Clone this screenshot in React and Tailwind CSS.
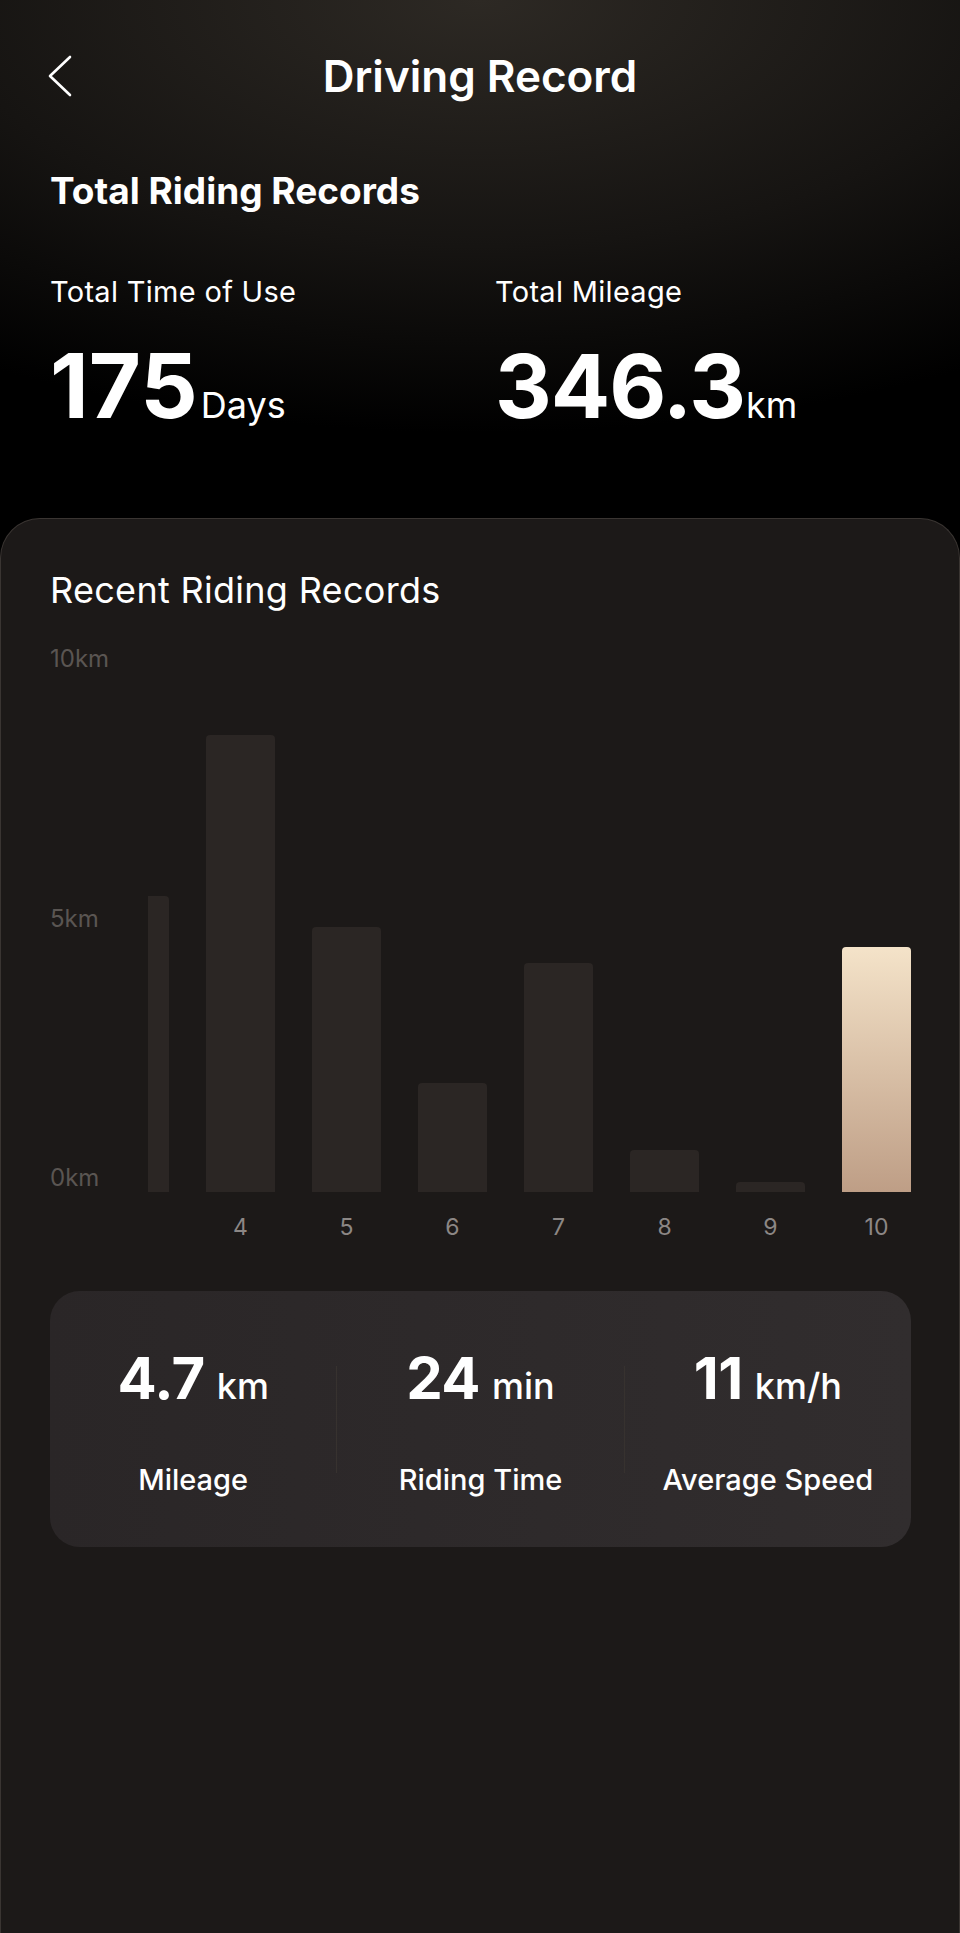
const bars = [
  { label: '', h: 296 },
  { label: '4', h: 457 },
  { label: '5', h: 265 },
  { label: '6', h: 109 },
  { label: '7', h: 229 },
  { label: '8', h: 42 },
  { label: '9', h: 10 },
  { label: '10', h: 245, active: true },
];

function Stat({ value, unit, label }) {
  return (
    <div className="flex-1 flex flex-col items-center pt-[55px]">
      <div className="flex items-baseline h-[64px]">
        <span className="text-[58px] leading-[64px] font-bold tracking-[-0.5px]">{value}</span>
        <span className="ml-[12px] text-[36px] leading-[40px] font-medium">{unit}</span>
      </div>
      <div className="mt-[52px] text-[29px] leading-[36px] font-medium">{label}</div>
    </div>
  );
}

export default function App() {
  return (
    <div className="min-h-screen flex flex-col bg-black text-white font-['Inter','Noto_Sans',sans-serif]">
      <div className="bg-[radial-gradient(110%_95%_at_50%_0%,#2d2924_0%,#161412_50%,#000000_88%)] px-[50px] pt-[50px] pb-[88px]">
        <div className="grid grid-cols-[1fr_auto_1fr] items-center h-[52px]">
          <svg width="26" height="42" viewBox="0 0 26 42" className="-ml-[3px]" fill="none">
            <path d="M23 2 L3 21 L23 40" stroke="white" strokeWidth="2.6" strokeLinecap="round" strokeLinejoin="round" />
          </svg>
          <h1 className="text-[44px] leading-[52px] font-semibold">Driving Record</h1>
          <div />
        </div>
        <h2 className="mt-[67px] text-[37px] leading-[44px] font-bold">Total Riding Records</h2>
        <div className="mt-[61px] grid grid-cols-[445px_1fr]">
          <div>
            <div className="text-[29px] leading-[36px] tracking-[0.3px]">Total Time of Use</div>
            <div className="mt-[32px] flex items-baseline">
              <span className="text-[90px] leading-[88px] font-bold">175</span>
              <span className="ml-[3px] text-[36px] leading-[40px]">Days</span>
            </div>
          </div>
          <div>
            <div className="text-[29px] leading-[36px] tracking-[0.3px]">Total Mileage</div>
            <div className="mt-[32px] flex items-baseline">
              <span className="text-[88px] leading-[88px] font-bold tracking-[-1px]">346.3</span>
              <span className="ml-[1px] text-[36px] leading-[40px]">km</span>
            </div>
          </div>
        </div>
      </div>

      <div className="flex-1 rounded-t-[40px] border border-b-0 border-[#3a3532] bg-[#1c1918] pl-[49px] pr-[48px] pt-[50px]">
        <h3 className="text-[36px] leading-[42px] font-normal tracking-[0.3px]">Recent Riding Records</h3>

        <div className="mt-[34px] flex items-start">
          <div className="w-[98px] h-[547px] flex flex-col justify-between text-[24px] leading-[28px] text-[#5a5552]">
            <span>10km</span>
            <span>5km</span>
            <span>0km</span>
          </div>
          <div className="flex-1 h-[596px] overflow-hidden flex justify-end items-end gap-[37px]">
            {bars.map((b, i) => (
              <div key={i} className="shrink-0 w-[69px] flex flex-col items-center">
                <div
                  className={
                    b.active
                      ? 'w-full rounded-t-[4px] bg-linear-to-b from-[#f4e3c9] to-[#be9e86]'
                      : 'w-full rounded-t-[4px] bg-[#2b2624]'
                  }
                  style={{ height: b.h }}
                />
                <span className="mt-[21px] h-[28px] text-[23px] leading-[28px] text-[#8c8785]">{b.label}</span>
              </div>
            ))}
          </div>
        </div>

        <div className="mt-[50px] h-[256px] rounded-[30px] bg-linear-to-r from-[#2a2627] to-[#312d2e] flex items-start">
          <Stat value="4.7" unit="km" label="Mileage" />
          <div className="self-center w-px h-[107px] bg-[#37322f]" />
          <Stat value="24" unit="min" label="Riding Time" />
          <div className="self-center w-px h-[107px] bg-[#37322f]" />
          <Stat value="11" unit="km/h" label="Average Speed" />
        </div>
      </div>
    </div>
  );
}
